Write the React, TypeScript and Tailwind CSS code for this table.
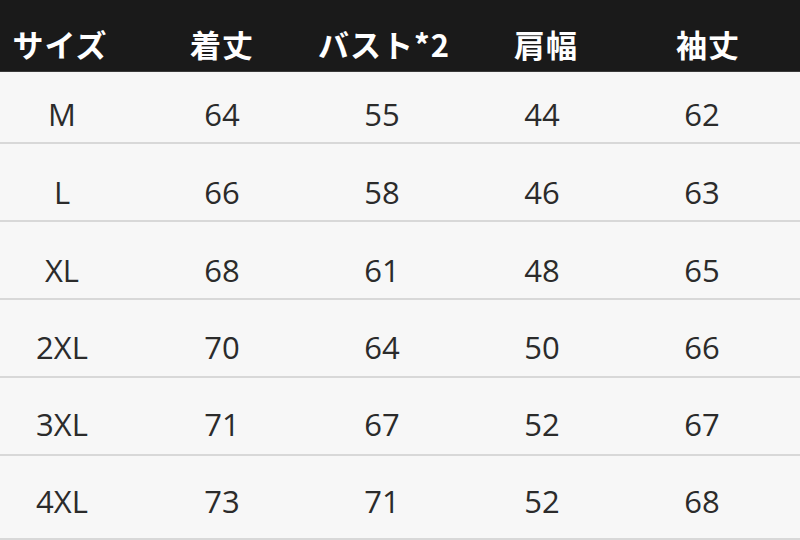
import React from 'react';

const headers = ['サイズ', '着丈', 'バスト*2', '肩幅', '袖丈'];

const rows = [
  ['M', '64', '55', '44', '62'],
  ['L', '66', '58', '46', '63'],
  ['XL', '68', '61', '48', '65'],
  ['2XL', '70', '64', '50', '66'],
  ['3XL', '71', '67', '52', '67'],
  ['4XL', '73', '71', '52', '68'],
];

// row heights include the 2px bottom rule
const rowClass = [
  'h-[72px] pt-[14px]',
  'h-[78px] pt-[20px]',
  'h-[78px] pt-[20px]',
  'h-[78px] pt-[18px]',
  'h-[78px] pt-[16px]',
  'h-[84px] pt-[8px]',
];

export default function App() {
  return (
    <div className="w-[800px] h-[540px] overflow-hidden bg-[#f7f7f7] font-['Open_Sans','Noto_Sans_CJK_JP',sans-serif]">
      {/* Header */}
      <div className="h-[72px] bg-[#1a1a1a] border-b border-[#3a3a3a] overflow-hidden">
        <div className="grid grid-cols-[repeat(5,162px)] -ml-[21px] h-full items-center pt-[16px]">
          {headers.map((h) => (
            <div
              key={h}
              className="text-center text-white text-[31px] font-bold leading-none tracking-[1px] font-['Noto_Sans_CJK_JP','Noto_Sans',sans-serif]"
            >
              {h}
            </div>
          ))}
        </div>
      </div>

      {/* Body */}
      {rows.map((row, i) => (
        <div key={i} className={`${rowClass[i]} border-b-2 border-[#d8d8d8] overflow-hidden`}>
          <div className="grid grid-cols-[repeat(5,160px)] -ml-[18px] h-full items-center">
            {row.map((cell, j) => (
              <div key={j} className="text-center text-[#2b2b2b] text-[31px] leading-none">
                {cell}
              </div>
            ))}
          </div>
        </div>
      ))}
    </div>
  );
}
